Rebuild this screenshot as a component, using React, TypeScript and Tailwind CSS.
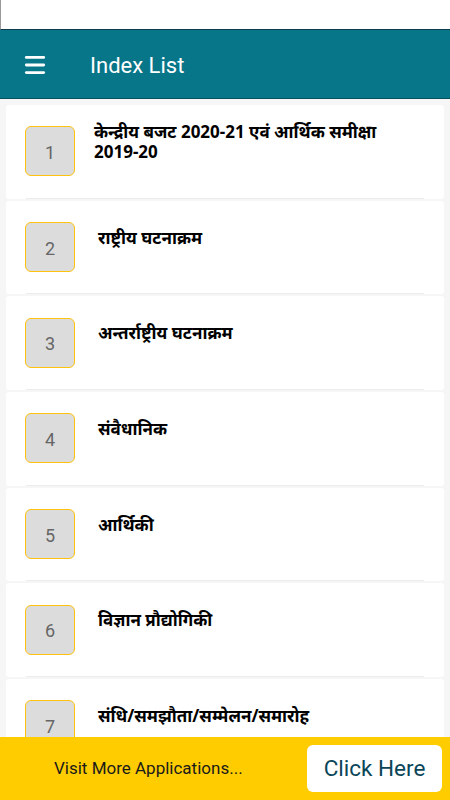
import { Menu } from 'lucide-react';

const items = [
	{ n: 1, title: 'केन्द्रीय बजट 2020-21 एवं आर्थिक समीक्षा 2019-20' },
	{ n: 2, title: 'राष्ट्रीय घटनाक्रम' },
	{ n: 3, title: 'अन्तर्राष्ट्रीय घटनाक्रम' },
	{ n: 4, title: 'संवैधानिक' },
	{ n: 5, title: 'आर्थिकी' },
	{ n: 6, title: 'विज्ञान प्रौद्योगिकी' },
	{ n: 7, title: 'संधि/समझौता/सम्मेलन/समारोह' },
];

const App = () => {
	return (
		<div
			className="relative flex h-[800px] w-[450px] flex-col overflow-hidden bg-[#f6f6f6]"
			style={{ fontFamily: 'Roboto, "Noto Sans", sans-serif' }}
		>
			<div className="h-[30px] shrink-0 border-b border-l border-b-[#0b3a48] border-l-[#9a9a9a] bg-white" />
			<div className="flex h-[69px] shrink-0 items-center border-b border-[#0a4f5c] bg-[#087689]">
				<div className="ml-[23px] w-[24px] pt-[2px] text-white">
					<Menu size={26} strokeWidth={2.6} className="-ml-[1px]" />
				</div>
				<h1 className="ml-[43px] pt-[3px] text-[22px] text-white">Index List</h1>
			</div>
			<div className="flex flex-1 flex-col gap-[2px] overflow-hidden pt-[6px]">
				{items.map((item) => (
					<div
						key={item.n}
						className="mx-[6px] flex h-[93.7px] shrink-0 flex-col rounded-[3px] bg-white"
					>
						<div className="flex flex-1 items-center">
							<div className="ml-[19px] flex h-[50px] w-[50px] shrink-0 items-center justify-center rounded-[6px] border border-[#ffc20e] bg-[#dcdcdc] pt-[2px] text-[18px] text-[#666]">
								{item.n}
							</div>
							<div
								className={`mb-[19px] w-[300px] text-[17px] leading-[20px] font-bold text-black ${
									item.n === 1 ? 'ml-[19px]' : 'ml-[23px]'
								}`}
								style={{ fontFamily: '"Noto Sans", sans-serif' }}
							>
								{item.title}
							</div>
						</div>
						<div className="mx-[20px] h-[1px] bg-[#ececec]" />
					</div>
				))}
			</div>
			<div className="absolute right-0 bottom-0 left-0 flex h-[63px] items-center bg-[#ffcc00]">
				<span className="ml-[54px] text-[17px] text-[#1a1a1a]">Visit More Applications...</span>
				<button className="mr-[8px] ml-auto flex h-[47px] w-[135px] items-center justify-center rounded-[6px] bg-white text-[22.5px] text-[#0b4558]">
					Click Here
				</button>
			</div>
		</div>
	);
};

export default App;
